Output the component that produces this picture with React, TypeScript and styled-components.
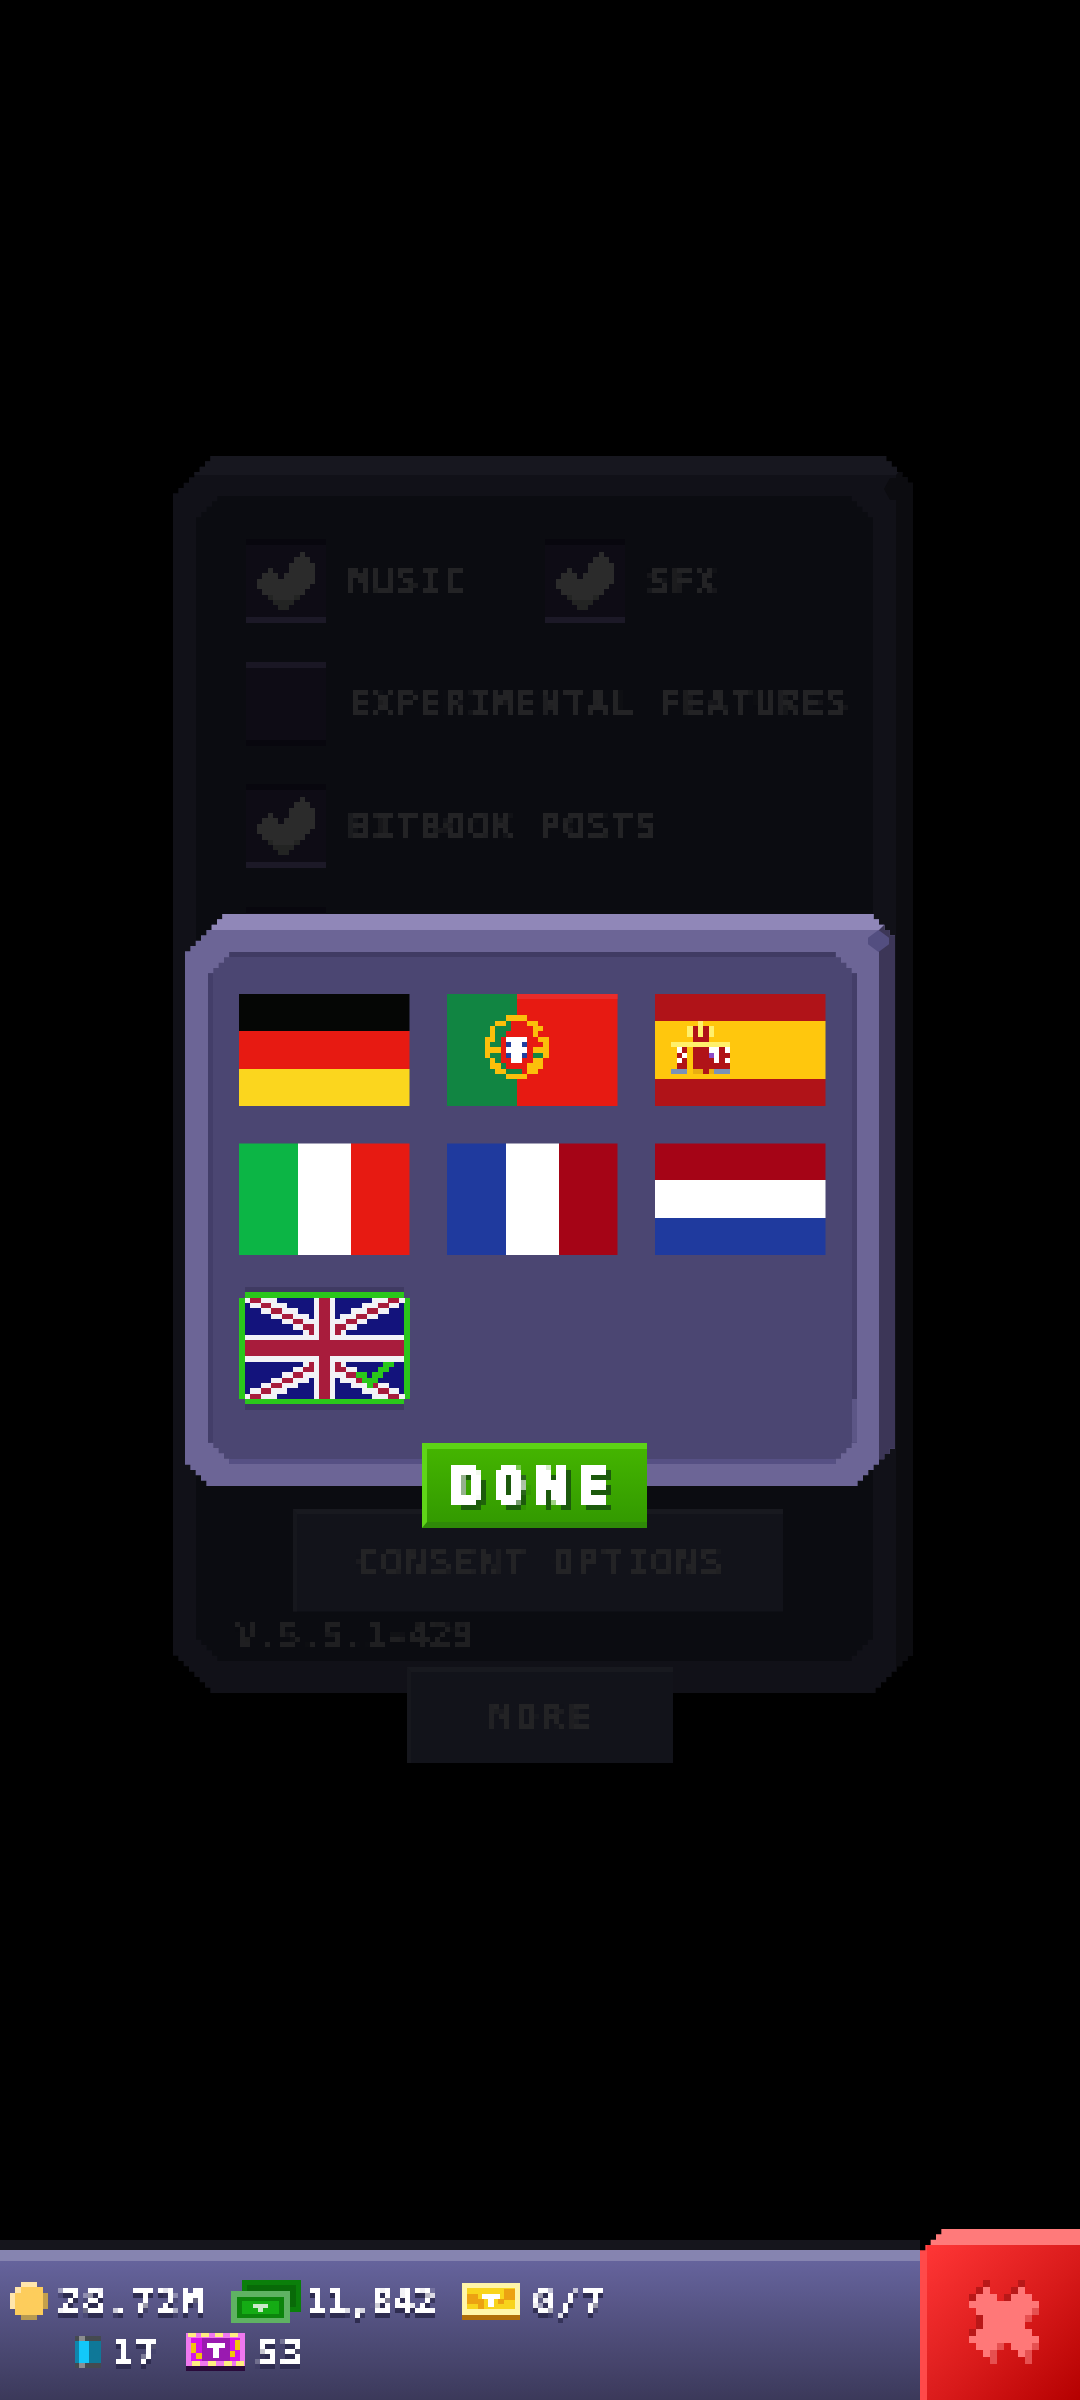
import React from "react";
import styled, { createGlobalStyle } from "styled-components";

const P = 16 / 3;

const stair = (p: number, n: number): [number, number][] => {
  const out: [number, number][] = [];
  for (let i = 0; i < n; i++) {
    out.push([i * p, (n - i) * p]);
    out.push([i * p, (n - i - 1) * p]);
  }
  out.push([n * p, 0]);
  return out;
};

const pixelCorners = (p: number, tl: number, tr = tl, br = tl, bl = tl): string => {
  const pts = [
    ...stair(p, tl).map(([x, y]) => `${x}px ${y}px`),
    ...stair(p, tr).reverse().map(([x, y]) => `calc(100% - ${x}px) ${y}px`),
    ...stair(p, br).map(([x, y]) => `calc(100% - ${x}px) calc(100% - ${y}px)`),
    ...stair(p, bl).reverse().map(([x, y]) => `${x}px calc(100% - ${y}px)`),
  ];
  return `polygon(${pts.join(",")})`;
};

const Global = createGlobalStyle`
  html, body { margin: 0; padding: 0; background: #000; }
  #root { width: 1080px; height: 2400px; overflow: hidden; }
`;

const Page = styled.div`
  position: relative;
  width: 1080px;
  height: 2400px;
  background: #000;
  display: flex;
  flex-direction: column;
  font-family: "DejaVu Sans Mono", "Liberation Mono", monospace;
`;

const Defs = styled.svg`
  width: 0;
  height: 0;
  flex: none;
`;

const PixelText = styled.span<{ $color?: string; $spacing?: number }>`
  font-family: "DejaVu Sans Mono", "Liberation Mono", monospace;
  font-weight: 700;
  font-size: 37px;
  line-height: 1;
  letter-spacing: ${(p) => p.$spacing ?? 1.6}px;
  white-space: nowrap;
  color: ${(p) => p.$color ?? "#232325"};
  filter: url(#pixelate);
`;

const PanelGroup = styled.section`
  margin: 456px 0 0 173px;
  width: 740px;
  display: flex;
  flex-direction: column;
  align-items: flex-start;
`;

const PanelFrame = styled.div`
  box-sizing: border-box;
  position: relative;
  width: 100%;
  height: 1237px;
  padding: 21px 0 32px 23px;
  background: #111118;
  border-top: 19px solid #17171f;
  border-right: 17px solid #0c0c10;
  clip-path: ${pixelCorners(P, 8, 6, 8, 8)};
  display: flex;

  &::after {
    content: "";
    position: absolute;
    top: 3px;
    right: 0;
    width: 12px;
    height: 22px;
    background: #0c0c10;
    clip-path: polygon(50% 0, 100% 0, 100% 100%, 50% 100%, 0 50%);
  }
`;

const PanelInner = styled.div`
  box-sizing: border-box;
  width: 677px;
  padding: 43px 0 7px 50px;
  background: #0b0c11;
  clip-path: ${pixelCorners(P, 5)};
  display: flex;
  flex-direction: column;
  gap: 38.5px;
`;

const OptionRow = styled.div`
  display: flex;
  align-items: center;
  height: 84px;
`;

const Option = styled.div<{ $width?: number }>`
  display: flex;
  align-items: center;
  gap: 22px;
  width: ${(p) => (p.$width ? `${p.$width}px` : "auto")};
`;

const CheckBox = styled.div<{ $checked: boolean }>`
  box-sizing: border-box;
  width: 80px;
  height: 84px;
  background: #0e0c15;
  border-top: 6px solid ${(p) => (p.$checked ? "#08070e" : "#1a1724")};
  border-bottom: 6px solid ${(p) => (p.$checked ? "#1c1927" : "#08070e")};
  display: flex;
  align-items: center;
  justify-content: center;
`;

const ConsentButton = styled.div`
  box-sizing: border-box;
  align-self: flex-start;
  margin: auto 0 -33px 47px;
  width: 490px;
  height: 103px;
  background: #12131a;
  border-top: 5px solid #18191f;
  border-left: 4px solid #16171d;
  display: flex;
  align-items: center;
  justify-content: center;
  clip-path: ${pixelCorners(P, 1)};
`;

const Version = styled(PixelText)`
  margin-left: -11px;
  color: #1f1f21;
`;

const MoreButton = styled.div`
  box-sizing: border-box;
  margin: -26px 0 0 234px;
  width: 266px;
  height: 96px;
  background: #12131a;
  border-top: 5px solid #18191f;
  border-left: 4px solid #16171d;
  display: flex;
  align-items: center;
  justify-content: center;
  clip-path: ${pixelCorners(P, 1)};
`;

const Modal = styled.div`
  box-sizing: border-box;
  position: absolute;
  left: 185px;
  top: 914px;
  width: 710px;
  height: 572px;
`;

const ModalShell = styled.div`
  box-sizing: border-box;
  position: relative;
  width: 100%;
  height: 100%;
  padding: 22px 22px 22px 23px;
  background: #6c6596;
  border-top: 16px solid #9087b8;
  border-right: 16px solid #3c3657;
  clip-path: ${pixelCorners(P, 8, 5, 8, 5)};
  display: flex;

  &::after {
    content: "";
    position: absolute;
    top: 0;
    right: -10px;
    width: 21px;
    height: 22px;
    background: #534e80;
    clip-path: polygon(50% 0, 100% 35%, 100% 65%, 50% 100%, 0 65%, 0 35%);
  }
`;

const ModalInner = styled.div`
  box-sizing: border-box;
  position: relative;
  flex: 1;
  padding: 37px 0 0 25.5px;
  background: #4b4672;
  border-top: 5px solid #403b63;
  border-left: 5px solid #433e69;
  border-right: 5px solid #433e68;
  border-bottom: 5px solid #565084;
  clip-path: ${pixelCorners(P, 5)};

  &::after {
    content: "";
    position: absolute;
    right: -5px;
    bottom: 0;
    width: 5px;
    height: 60px;
    background: #5c5686;
  }
`;

const FlagGrid = styled.div`
  display: grid;
  grid-template-columns: repeat(3, 171px);
  grid-auto-rows: 112px;
  column-gap: 37px;
  row-gap: 37.4px;
`;

const FlagSvg = styled.svg`
  display: block;
  width: 171px;
  height: 112px;
  clip-path: ${pixelCorners(P, 1)};
`;

const SelectedFlagSvg = styled.svg`
  display: block;
  width: 171px;
  height: 122.67px;
  margin-top: -5.33px;
`;

const DoneButton = styled.div`
  box-sizing: border-box;
  position: absolute;
  left: 237px;
  bottom: -42px;
  width: 225px;
  height: 85px;
  background: linear-gradient(#44b400, #339a00);
  border-top: 6px solid #5dd316;
  border-left: 5px solid #5fd518;
  border-bottom: 6px solid #2f8a08;
  clip-path: ${pixelCorners(P, 1)};
  display: flex;
  align-items: center;
  justify-content: center;
`;

const DoneLabel = styled.span`
  font-family: "DejaVu Sans Mono", "Liberation Mono", monospace;
  font-weight: 700;
  font-size: 52px;
  line-height: 1;
  letter-spacing: 11px;
  margin-right: 3px;
  color: #fff;
  -webkit-text-stroke: 3px #fff;
  text-shadow: 6px 6px 0 #1c5a0c;
  filter: url(#pixelate);
`;

const Footer = styled.footer`
  margin-top: auto;
  height: 171px;
  display: flex;
  align-items: flex-end;
`;

const Bar = styled.div`
  box-sizing: border-box;
  width: 920px;
  height: 160px;
  border-top: 10px solid #15151c;
  display: flex;
  flex-direction: column;
  background: linear-gradient(#65639c 8%, #3b395a 100%);
`;

const BarLip = styled.div`
  height: 11px;
  flex: none;
  background: #8684b0;
`;

const Stats = styled.div`
  display: flex;
  flex-direction: column;
  padding-top: 18px;
  gap: 10px;
`;

const StatRow = styled.div<{ $left: number; $gap: number; $height: number }>`
  display: flex;
  align-items: center;
  height: ${(p) => p.$height}px;
  padding-left: ${(p) => p.$left}px;
  gap: ${(p) => p.$gap}px;
`;

const Stat = styled.div<{ $gap: number }>`
  display: flex;
  align-items: center;
  gap: ${(p) => p.$gap}px;
`;

const StatText = styled(PixelText)`
  color: #fff;
  text-shadow: 0 5px 0 #2e2c50;
`;

const CloseButton = styled.div`
  box-sizing: border-box;
  width: 160px;
  height: 171px;
  background: linear-gradient(135deg, #ff3636 0%, #d81a1a 55%, #b40000 100%);
  border-top: 16px solid #ff7a7a;
  border-left: 7px solid #ff4a4a;
  clip-path: polygon(0 21.33px, 5.33px 21.33px, 5.33px 16px, 10.67px 16px, 10.67px 10.67px, 16px 10.67px, 16px 5.33px, 21.33px 5.33px, 21.33px 0, 100% 0, 100% 100%, 0 100%);
  display: flex;
  align-items: flex-start;
  justify-content: center;
  padding: 35px 0 0 0;
`;

const Art = styled.svg`
  display: block;
  flex: none;
`;

type Palette = Record<string, string>;

const cells = (rows: string[], pal: Palette, ox = 0, oy = 0) =>
  rows.flatMap((row, y) =>
    row.split("").map((c, x) =>
      pal[c] ? <rect key={`${ox}-${oy}-${x}-${y}`} x={ox + x} y={oy + y} width={1.02} height={1.02} fill={pal[c]} /> : null
    )
  );

const PixelArt = ({ rows, pal, size }: { rows: string[]; pal: Palette; size: number }) => (
  <Art
    width={rows[0].length * size}
    height={rows.length * size}
    viewBox={`0 0 ${rows[0].length} ${rows.length}`}
    shapeRendering="crispEdges"
  >
    {cells(rows, pal)}
  </Art>
);

const CHECK = [
  "........X..",
  ".......XXX.",
  "......XXXXX",
  "..X...XXXXX",
  ".XXX.XXXXXX",
  "XXXXXXXXXXX",
  "XXXXXXXXXX.",
  ".XXXXXXXX..",
  "..DXXXXD...",
  "...DDDD....",
  "....DD.....",
];

const CheckMark = () => <PixelArt rows={CHECK} pal={{ X: "#2b2b2b", D: "#232423" }} size={P} />;

const RED = "#e71a12";
const WHITE = "#ffffff";
const NAVY = "#1f3a9e";
const WINE = "#a50416";

const Stripes = ({ vertical, bands }: { vertical?: boolean; bands: [number, number, string][] }) => (
  <>
    {bands.map(([a, b, c]) =>
      vertical ? (
        <rect key={a} x={a} y={0} width={b - a} height={21} fill={c} />
      ) : (
        <rect key={a} x={0} y={a} width={32} height={b - a} fill={c} />
      )
    )}
  </>
);

const Flag = ({ label, children }: { label: string; children: React.ReactNode }) => (
  <FlagSvg viewBox="0 0 32 21" shapeRendering="crispEdges" role="img" aria-label={label}>
    {children}
  </FlagSvg>
);

const CREST = [
  "....YYYY....",
  "..YYGRRRYY..",
  ".YGGGRRRRYY.",
  ".YGGRRRRRYR.",
  "YYGRWWWWRRYY",
  "YGGRBWWBRRRY",
  "YYYRWWWWRYYY",
  "YGGRBWWBRGGY",
  ".YGRRWWRRYY.",
  ".YYGRRRRYYY.",
  "..YYGGGRYY..",
  "....YYYY....",
];

const COAT = [
  ".....P.....",
  "...PRPRP...",
  "...PRPRP...",
  "....RRR....",
  "PPPPPPPPPPP",
  ".WR.RRRWWRW",
  ".RW.RRRVWRR",
  ".WR.RRRRWRW",
  ".RR.RRRRRRR",
  "GGG.DDRDGGG",
];

const UK = () => {
  const rects: React.ReactNode[] = [];
  const put = (x: number, y: number, c: string) =>
    rects.push(<rect key={`${x}-${y}-${rects.length}`} x={x} y={y} width={1.02} height={1.02} fill={c} />);
  const mirror = (x: number, y: number, c: string) => {
    put(x, y, c);
    put(31 - x, y, c);
    put(x, 20 - y, c);
    put(31 - x, 20 - y, c);
  };
  for (let r = 1; r <= 7; r++) {
    const from = Math.max(1, 2 * r - 2);
    const to = Math.min(13, 2 * r + 4);
    for (let x = from; x <= to; x++) mirror(x, r, "#f2f2f6");
  }
  for (let r = 1; r <= 6; r++) {
    mirror(2 * r, r, "#a81c3c");
    mirror(2 * r + 1, r, "#a81c3c");
  }
  mirror(13, 7, "#a81c3c");
  return (
    <SelectedFlagSvg viewBox="0 -1 32 23" shapeRendering="crispEdges" role="img" aria-label="United Kingdom">
      <rect x={1} y={-1} width={30} height={23} fill="#3f3a62" />
      <rect x={1} y={0} width={30} height={21} fill="#2ac71b" />
      <rect x={0} y={1} width={32} height={19} fill="#2ac71b" />
      <rect x={1} y={1} width={30} height={19} fill="#13137c" />
      {rects}
      <rect x={14} y={1} width={4} height={19} fill="#f2f2f6" />
      <rect x={1} y={8} width={30} height={5} fill="#f2f2f6" />
      <rect x={15} y={1} width={2} height={19} fill="#a81c3c" />
      <rect x={1} y={9} width={30} height={3} fill="#a81c3c" />
      {cells(
        [".....GG.", "....GG..", "GG.GG...", ".GGG....", "..G....."],
        { G: "#2ac71b" },
        22,
        13
      )}
    </SelectedFlagSvg>
  );
};

const Coin = () => (
  <PixelArt
    size={5.43}
    pal={{ L: "#ffe6ac", M: "#fdcd5c", S: "#c4a04c", D: "#b89a50" }}
    rows={["..LLL..", ".LMMMM.", "LMMMMMS", "LMMMMMS", "LMMMMMS", ".MMMMM.", "..DDD.."]}
  />
);

const CashIcon = () => (
  <Art width={70} height={43} viewBox="0 0 70 43" shapeRendering="crispEdges">
    <rect x={11} y={0} width={59} height={32} fill="#0a7f0a" />
    <rect x={16} y={5} width={49} height={22} fill="#086a08" />
    <rect x={0} y={11} width={59} height={32} fill="#5fb263" />
    <rect x={6} y={17} width={47} height={21} fill="#0c840c" />
    <rect x={11} y={21} width={37} height={13} fill="#14ac14" />
    <rect x={22} y={24} width={15} height={4} fill="#cbe9cb" />
    <rect x={27} y={28} width={5} height={4} fill="#cbe9cb" />
  </Art>
);

const GoldTicket = () => (
  <Art width={58} height={37} viewBox="0 0 58 37" shapeRendering="crispEdges">
    <rect width={58} height={37} fill="#fff5a8" />
    <rect x={5} y={5} width={48} height={21} fill="#f8d41c" />
    <rect x={5} y={11} width={11} height={10} fill="#eca212" />
    <rect x={42} y={6} width={11} height={11} fill="#eca212" />
    <rect x={16} y={16} width={6} height={10} fill="#eca212" />
    <rect x={36} y={16} width={6} height={5} fill="#eca212" />
    <rect x={20} y={11} width={18} height={5} fill="#fff" />
    <rect x={26} y={16} width={6} height={8} fill="#fff" />
    <rect y={32} width={58} height={5} fill="#b06e08" />
  </Art>
);

const PurpleTicket = () => (
  <Art width={59} height={38} viewBox="0 0 59 38" shapeRendering="crispEdges">
    <rect width={59} height={33} fill="#ef78ef" />
    {[0, 13, 27, 42].map((x) => (
      <rect key={x} x={x + 2} y={0} width={8} height={4} fill="#ffee80" />
    ))}
    {[6, 22, 38, 50].map((x) => (
      <rect key={x} x={x} y={28} width={8} height={5} fill="#ffee80" />
    ))}
    <rect x={5} y={5} width={49} height={23} fill="#d414e8" />
    <rect x={16} y={5} width={28} height={23} fill="#9a1ab0" />
    <rect x={5} y={10} width={5} height={10} fill="#f2c40c" />
    <rect x={49} y={7} width={5} height={10} fill="#f2c40c" />
    <rect x={10} y={20} width={6} height={6} fill="#f2c40c" />
    <rect x={44} y={18} width={5} height={6} fill="#f2c40c" />
    <rect x={21} y={10} width={18} height={5} fill="#fff" />
    <rect x={27} y={15} width={6} height={10} fill="#fff" />
    <rect y={33} width={59} height={5} fill="#2a0a3a" />
  </Art>
);

const CellIcon = () => (
  <Art width={26} height={32} viewBox="0 0 26 32" shapeRendering="crispEdges">
    <rect width={26} height={32} fill="#454a50" />
    <rect x={4} width={6} height={32} fill="#8b8d90" />
    <rect y={5} width={4} height={22} fill="#0f86ac" />
    <rect x={4} y={5} width={10} height={22} fill="#12c8fa" />
    <rect x={14} y={5} width={12} height={22} fill="#0f7898" />
  </Art>
);

const CROSS = [
  "...d....d...",
  "..dX...dX...",
  ".dXXX.dXXX..",
  ".XXXXXXXXXX.",
  "..XXXXXXXXs.",
  "..dXXXXXXs..",
  "..dXXXXXX...",
  ".dXXXXXXXX..",
  ".XXXXXXXXXX.",
  "..XXXs.XXXs.",
  "...Xs...Xs..",
  "....s....s..",
];

const CloseIcon = () => (
  <PixelArt rows={CROSS} pal={{ X: "#ff7878", s: "#e65050", d: "#b81818" }} size={7} />
);

const FLAGS_TOP: { label: string; node: React.ReactNode }[] = [
  {
    label: "Deutsch",
    node: <Stripes bands={[[0, 7, "#050605"], [7, 14, RED], [14, 21, "#fbd61e"]]} />,
  },
  {
    label: "Português",
    node: (
      <>
        <Stripes vertical bands={[[0, 13, "#118542"], [13, 32, RED]]} />
        <rect x={13} y={0} width={19} height={1} fill="#e92c2a" />
        {cells(CREST, { Y: "#fbbf0b", G: "#118542", R: RED, W: WHITE, B: "#21409f" }, 7, 4)}
      </>
    ),
  },
  {
    label: "Español",
    node: (
      <>
        <Stripes bands={[[0, 5, "#b01318"], [5, 16, "#ffc70d"], [16, 21, "#b01318"]]} />
        {cells(COAT, { P: "#fff06c", R: "#b01318", W: WHITE, V: "#8a4ac8", G: "#7a92b8", D: "#e8ad12" }, 3, 5)}
      </>
    ),
  },
  {
    label: "Italiano",
    node: <Stripes vertical bands={[[0, 11, "#0cb545"], [11, 21, WHITE], [21, 32, RED]]} />,
  },
  {
    label: "Français",
    node: <Stripes vertical bands={[[0, 11, NAVY], [11, 21, WHITE], [21, 32, WINE]]} />,
  },
  {
    label: "Nederlands",
    node: <Stripes bands={[[0, 7, WINE], [7, 14, WHITE], [14, 21, NAVY]]} />,
  },
];

export default function App() {
  return (
    <Page>
      <Global />
      <Defs aria-hidden="true">
        <filter id="pixelate" x="-2%" y="-10%" width="104%" height="130%" primitiveUnits="userSpaceOnUse" colorInterpolationFilters="sRGB">
          <feFlood x="2" y="2" width="1" height="1" floodColor="#fff" />
          <feComposite width="5" height="5" />
          <feTile result="grid" />
          <feComposite in="SourceGraphic" in2="grid" operator="in" />
          <feMorphology operator="dilate" radius="2" />
        </filter>
      </Defs>
      <PanelGroup>
        <PanelFrame>
          <PanelInner>
            <OptionRow>
              <Option $width={299}>
                <CheckBox $checked><CheckMark /></CheckBox>
                <PixelText>MUSIC</PixelText>
              </Option>
              <Option>
                <CheckBox $checked><CheckMark /></CheckBox>
                <PixelText>SFX</PixelText>
              </Option>
            </OptionRow>
            <OptionRow>
              <Option>
                <CheckBox $checked={false} />
                <PixelText>EXPERIMENTAL FEATURES</PixelText>
              </Option>
            </OptionRow>
            <OptionRow>
              <Option>
                <CheckBox $checked><CheckMark /></CheckBox>
                <PixelText>BITBOOK POSTS</PixelText>
              </Option>
            </OptionRow>
            <OptionRow>
              <CheckBox $checked />
            </OptionRow>
            <ConsentButton>
              <PixelText $spacing={2.3}>CONSENT OPTIONS</PixelText>
            </ConsentButton>
            <Version $spacing={-0.7}>V.5.5.1-429</Version>
          </PanelInner>
        </PanelFrame>
        <MoreButton>
          <PixelText $spacing={4}>MORE</PixelText>
        </MoreButton>
      </PanelGroup>

      <Modal>
        <ModalShell>
          <ModalInner>
            <FlagGrid>
              {FLAGS_TOP.map((f) => (
                <Flag key={f.label} label={f.label}>{f.node}</Flag>
              ))}
              <UK />
            </FlagGrid>
          </ModalInner>
        </ModalShell>
        <DoneButton>
          <DoneLabel>DONE</DoneLabel>
        </DoneButton>
      </Modal>

      <Footer>
        <Bar>
          <BarLip />
          <Stats>
            <StatRow $left={10} $gap={26} $height={44}>
              <Stat $gap={10}><Coin /><StatText $spacing={2.3}>28.72M</StatText></Stat>
              <Stat $gap={4}><CashIcon /><StatText $spacing={-0.6}>11,842</StatText></Stat>
              <Stat $gap={13}><GoldTicket /><StatText $spacing={2.3}>0/7</StatText></Stat>
            </StatRow>
            <StatRow $left={75} $gap={26} $height={38}>
              <Stat $gap={10}><CellIcon /><StatText $spacing={2.3}>17</StatText></Stat>
              <Stat $gap={10}><PurpleTicket /><StatText $spacing={2.3}>53</StatText></Stat>
            </StatRow>
          </Stats>
        </Bar>
        <CloseButton>
          <CloseIcon />
        </CloseButton>
      </Footer>
    </Page>
  );
}
